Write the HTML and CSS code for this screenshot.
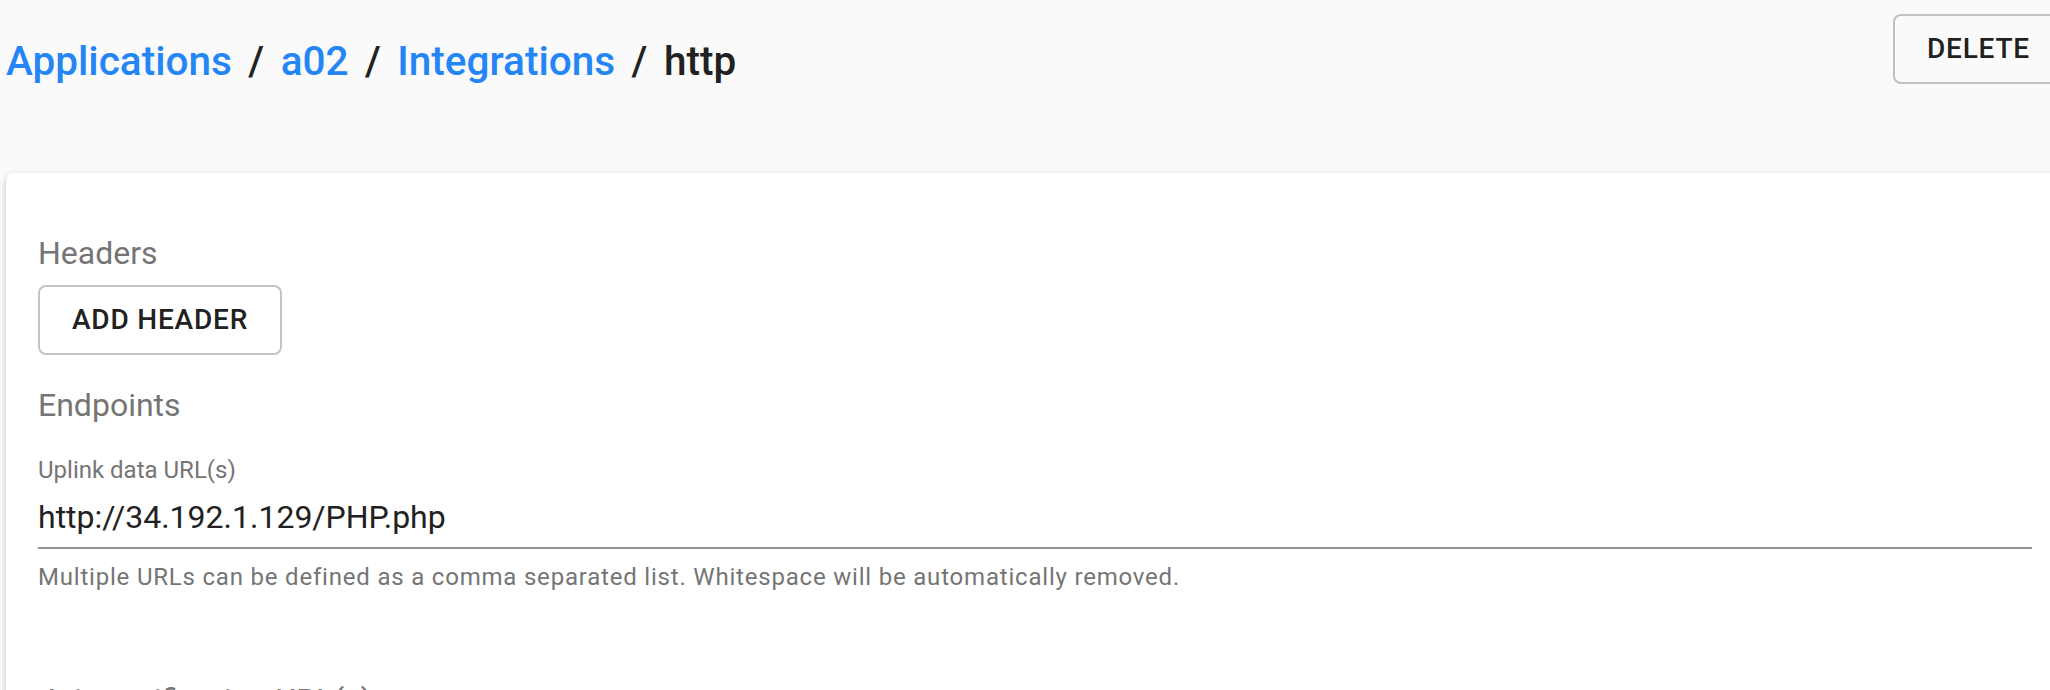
FILE: index.html
```html
<!DOCTYPE html>
<html lang="en">
<head>
<meta charset="utf-8">
<title>http - Integrations</title>
<link rel="stylesheet" href="styles.css">
</head>
<body>
<div class="page">
  <header class="titlebar">
    <nav class="breadcrumb">
      <a class="crumb-link" href="#">Applications</a><span class="sep">/</span><a class="crumb-link" href="#">a02</a><span class="sep">/</span><a class="crumb-link" href="#">Integrations</a><span class="sep">/</span><span class="crumb-current">http</span>
    </nav>
    <button class="btn btn-delete" type="button">Delete</button>
  </header>
  <main class="card">
    <form class="form">
      <div class="form-label">Headers</div>
      <button type="button" class="btn btn-add">Add header</button>
      <div class="form-label section-label">Endpoints</div>
      <div class="field">
        <label class="field-label shrunk" for="uplink">Uplink data URL(s)</label>
        <input class="input" id="uplink" type="text" value="http://34.192.1.129/PHP.php" readonly>
        <p class="helper">Multiple URLs can be defined as a comma separated list. Whitespace will be automatically removed.</p>
      </div>
      <div class="field field-empty">
        <label class="field-label floating" for="join">Join notification URL(s)</label>
        <input class="input" id="join" type="text" value="" readonly>
      </div>
    </form>
  </main>
</div>
</body>
</html>
```
FILE: styles.css
```css
html, body {
  margin: 0;
  padding: 0;
  background: #fafafa;
  overflow: hidden;
  font-family: Roboto, "Liberation Sans", sans-serif;
}

.page {
  width: 2058px;
  padding-left: 6px;
}

.titlebar {
  display: flex;
  justify-content: space-between;
  align-items: flex-start;
  height: 173px;
}

.breadcrumb {
  padding-top: 29px;
  font-size: 40.5px;
  line-height: 64px;
  font-weight: 500;
  color: #212121;
  white-space: nowrap;
}

.crumb-link {
  color: #2485f5;
  text-decoration: none;
}

.sep {
  margin: 0 16.5px;
}

.crumb-current {
  color: #212121;
}

.btn {
  font-family: Roboto, "Liberation Sans", sans-serif;
  font-size: 28px;
  font-weight: 500;
  line-height: 48px;
  letter-spacing: 0.02857em;
  text-transform: uppercase;
  color: #212121;
  background: transparent;
  border: 2px solid rgba(0, 0, 0, 0.23);
  border-radius: 8px;
  padding: 9px 32px;
  margin: 0;
  cursor: pointer;
}

.btn-delete {
  margin-top: 14px;
}

.card {
  display: block;
  background: #fff;
  border-radius: 8px;
  box-shadow: 0 2px 6px rgba(0, 0, 0, 0.2), 0 2px 2px rgba(0, 0, 0, 0.14), 0 4px 2px -2px rgba(0, 0, 0, 0.12);
  padding: 64px 32px 0;
  height: 700px;
}

.form {
  display: flex;
  flex-direction: column;
  align-items: flex-start;
}

.form-label {
  font-size: 32px;
  line-height: 32px;
  color: #757575;
}

.btn-add {
  margin-top: 16px;
}

.section-label {
  margin-top: 34px;
}

.field {
  position: relative;
  align-self: stretch;
  margin-top: 34px;
}

.field-label {
  display: block;
  color: #757575;
}

.field-label.shrunk {
  margin-top: 3px;
  font-size: 24px;
  line-height: 24px;
}

.input {
  display: block;
  box-sizing: border-box;
  width: 100%;
  height: 63px;
  margin: 4px 0 0;
  padding: 12px 0;
  border: 0;
  border-bottom: 2px solid rgba(0, 0, 0, 0.42);
  border-radius: 0;
  background: transparent;
  outline: none;
  font-family: Roboto, "Liberation Sans", sans-serif;
  font-size: 32px;
  line-height: 37px;
  color: #212121;
}

.helper {
  margin: 16px 0 0;
  font-size: 24px;
  line-height: 24px;
  letter-spacing: 0.0333em;
  color: #757575;
}

.field-empty {
  margin-top: 42px;
  padding-top: 27px;
}

.field-label.floating {
  position: absolute;
  top: 53px;
  left: 0;
  font-size: 32px;
  line-height: 32px;
}
```
